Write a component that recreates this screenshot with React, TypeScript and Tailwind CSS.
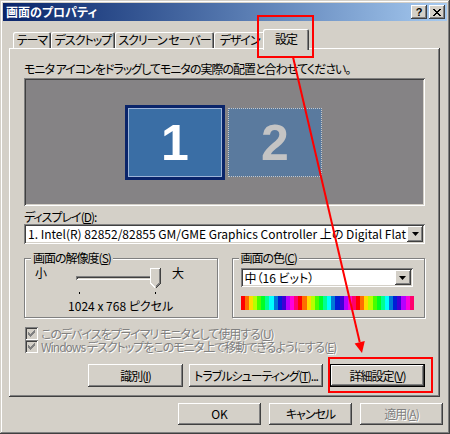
import React from 'react';

const raised =
  'shadow-[inset_-1px_-1px_#404040,inset_1px_1px_#ffffff,inset_-2px_-2px_#808080,inset_2px_2px_#d4d0c8]';
const sunken =
  'shadow-[inset_1px_1px_#808080,inset_-1px_-1px_#ffffff,inset_2px_2px_#404040,inset_-2px_-2px_#d4d0c8]';
const disabledText = 'text-[#808080] [text-shadow:1px_1px_0_#ffffff]';

const Button = ({ children, className = '', isDefault = false, disabled = false }: any) => (
  <div
    className={`flex items-center justify-center whitespace-nowrap bg-[#d4d0c8] ${
      isDefault
        ? 'shadow-[inset_0_0_0_1px_#000000,inset_-2px_-2px_#404040,inset_2px_2px_#ffffff,inset_-3px_-3px_#808080]'
        : raised
    } ${disabled ? disabledText : 'text-black'} ${className}`}
  >
    {children}
  </div>
);

const Combo = ({ text, className = '' }: any) => (
  <div className={`flex items-stretch bg-white p-[2px] ${sunken} ${className}`}>
    <div className="flex-1 overflow-hidden whitespace-nowrap pl-[2px] leading-[15px] tracking-normal">{text}</div>
    <div className={`flex w-[16px] items-center justify-center bg-[#d4d0c8] ${raised}`}>
      <svg width="7" height="4" viewBox="0 0 7 4">
        <path d="M0 0h7L3.5 4z" fill="#000" />
      </svg>
    </div>
  </div>
);

const Check = ({ children }: any) => (
  <div className="flex h-[13px] items-center">
    <div className={`flex h-[13px] w-[13px] shrink-0 items-center justify-center bg-[#d4d0c8] ${sunken}`}>
      <svg width="7" height="7" viewBox="0 0 7 7" shapeRendering="crispEdges">
        <path d="M0 2h1v1h1v1h1V3h1V2h1V1h1V0h1v3H6v1H5v1H4v1H3v1H2V6H1V5H0z" fill="#808080" />
      </svg>
    </div>
    <span className={`ml-[3px] whitespace-nowrap leading-[13px] ${disabledText}`}>{children}</span>
  </div>
);

const GroupBox = ({ label, children, className = '' }: any) => (
  <div
    className={`relative h-[60px] border border-[#808080] shadow-[1px_1px_0_#ffffff,inset_1px_1px_0_#ffffff] ${className}`}
  >
    <span className="absolute left-[6px] top-[-8px] whitespace-nowrap bg-[#d4d0c8] px-[2px] leading-[14px]">{label}</span>
    {children}
  </div>
);

const tabs = [
  { label: 'テーマ', w: 'w-[38px]' },
  { label: 'デスクトップ', w: 'w-[64px]' },
  { label: 'スクリーン セーバー', w: 'w-[99px]' },
  { label: 'デザイン', w: 'w-[51px]' },
];

const colorSteps = Array.from({ length: 42 }, (_, i) => (i % 14) * (360 / 14));

export default function App() {
  return (
    <div className="relative h-[434px] w-[450px] overflow-hidden bg-[#d4d0c8] p-[3px] font-['Noto_Sans_CJK_JP',sans-serif] text-[12px] tracking-[-1px] text-black [font-feature-settings:'palt'] shadow-[inset_-1px_-1px_#404040,inset_1px_1px_#d4d0c8,inset_-2px_-2px_#808080,inset_2px_2px_#ffffff]">
      {/* title bar */}
      <div className="flex h-[18px] items-center bg-linear-to-r from-[#0a246a] to-[#a6caf0] pl-[3px] pr-[2px]">
        <span className="flex-1 font-bold leading-[18px] tracking-normal text-white">画面のプロパティ</span>
        <div className={`flex h-[14px] w-[16px] items-center justify-center bg-[#d4d0c8] ${raised}`}>
          <span className="font-['Liberation_Sans',sans-serif] text-[11px] font-bold leading-[14px] tracking-normal">?</span>
        </div>
        <div className={`ml-[2px] flex h-[14px] w-[16px] items-center justify-center bg-[#d4d0c8] ${raised}`}>
          <svg width="8" height="7" viewBox="0 0 8 7" shapeRendering="crispEdges">
            <path
              d="M0 0h2v1h1v1h2V1h1V0h2v1H7v1H6v1H5v1h1v1h1v1h1v1H6V6H5V5H3v1H2v1H0V6h1V5h1V4h1V3H2V2H1V1H0z"
              fill="#000"
            />
          </svg>
        </div>
      </div>

      {/* tabs */}
      <div className="mx-[6px] mt-[8px] flex h-[19px] items-end pl-[4px]">
        {tabs.map((t) => (
          <div
            key={t.label}
            className={`flex h-[16px] items-center justify-center whitespace-nowrap rounded-t-[2px] leading-[14px] ${t.w} shadow-[inset_1px_1px_#ffffff,inset_-1px_0_#404040,inset_-2px_0_#808080]`}
          >
            {t.label}
          </div>
        ))}
        <div className="relative z-10 -mb-[2px] -ml-[2px] flex h-[21px] w-[46px] items-start justify-center rounded-t-[2px] bg-[#d4d0c8] pt-[3px] leading-[14px] shadow-[inset_1px_1px_#ffffff,inset_-1px_0_#404040,inset_-2px_0_#808080]">
          設定
        </div>
      </div>

      {/* panel */}
      <div className={`mx-[6px] flex h-[349px] w-[431px] flex-col px-[15px] pt-[14px] ${raised}`}>
        <div className="whitespace-nowrap pl-[-2px] leading-[14px]">モニタ アイコンをドラッグしてモニタの実際の配置と合わせてください。</div>

        <div className={`mt-[2px] flex h-[128px] items-start bg-[#858385] pl-[101px] pt-[27px] ${sunken}`}>
          <div className="h-[75px] w-[100px] border-[3px] border-[#0a246a]">
            <div className="flex h-full items-center justify-center border border-[#9cb4d8] bg-[#3a6ea5]">
              <span className="font-['Liberation_Sans',sans-serif] text-[50px] font-bold leading-none tracking-normal text-white">1</span>
            </div>
          </div>
          <div className="ml-[3px] mt-[3px] flex h-[69px] w-[94px] items-center justify-center border border-dotted border-[#c8c8c8] bg-[#5a7a9e]">
            <span className="font-['Liberation_Sans',sans-serif] text-[50px] font-bold leading-none tracking-normal text-[#c4c4c4]">2</span>
          </div>
        </div>

        <div className="mt-[4px] leading-[14px]">
          ディスプレイ(<u>D</u>):
        </div>
        <Combo
          className="h-[20px]"
          text="1. Intel(R) 82852/82855 GM/GME Graphics Controller 上の Digital Flat Panel (1024x768)"
        />

        <div className="mt-[14px] grid grid-cols-2 gap-[14px]">
          <GroupBox
            label={
              <>
                画面の解像度(<u>S</u>)
              </>
            }
          >
            <div className="flex h-[35px] items-start pl-[10px]">
              <span className="mt-[7px] leading-[14px]">小</span>
              <div className="relative ml-[28px] h-[35px] w-[90px]">
                <div className="absolute left-[2px] top-[17px] h-[4px] w-[83px] shadow-[inset_1px_1px_#808080,inset_-1px_-1px_#ffffff,inset_2px_2px_#404040]" />
                <svg className="absolute left-[76px] top-[9px]" width="11" height="21" viewBox="0 0 11 21" shapeRendering="crispEdges">
                  <path d="M0 0h11v15l-5.5 6L0 15z" fill="#d4d0c8" />
                  <path d="M0.5 15V0.5h10" stroke="#ffffff" fill="none" />
                  <path d="M10.5 0v15.2L5.5 20.5" stroke="#404040" fill="none" />
                  <path d="M9.5 1v14L5.5 19.3" stroke="#808080" fill="none" />
                  <path d="M0.5 15L5 19.5" stroke="#ffffff" fill="none" />
                </svg>
                <div className="absolute left-[5px] top-[33px] h-[2px] w-[1px] bg-black" />
                <div className="absolute left-[81px] top-[33px] h-[2px] w-[1px] bg-black" />
              </div>
              <span className="ml-[8px] mt-[7px] leading-[14px]">大</span>
            </div>
            <div className="mt-[5px] text-center leading-[14px] tracking-normal">1024 x 768 ピクセル</div>
          </GroupBox>

          <GroupBox
            label={
              <>
                画面の色(<u>C</u>)
              </>
            }
          >
            <div className="pl-[8px] pt-[9px]">
              <Combo className="h-[19px] w-[172px]" text="中（16 ビット）" />
              <div className="mt-[9px] flex h-[14px] w-[173px]">
                {colorSteps.map((h, i) => (
                  <div key={i} className="flex-1" style={{ backgroundColor: `hsl(${h} 100% ${h > 200 && h < 260 ? 42 : 50}%)` }} />
                ))}
              </div>
            </div>
          </GroupBox>
        </div>

        <div className="mt-[9px] flex flex-col pl-[1px]">
          <Check>
            このデバイスをプライマリ モニタとして使用する(<u>U</u>)
          </Check>
          <Check>
            Windows デスクトップをこのモニタ上で移動できるようにする(<u>E</u>)
          </Check>
        </div>

        <div className="mt-[11px] flex h-[23px] justify-end gap-[6px]">
          <Button className="w-[95px]">
            識別(<u>I</u>)
          </Button>
          <Button className="w-[134px]">
            トラブルシューティング(<u>T</u>)...
          </Button>
          <Button className="ml-[1px] w-[95px]" isDefault>
            詳細設定(<u>V</u>)
          </Button>
        </div>
      </div>

      {/* dialog buttons */}
      <div className="mt-[6px] flex h-[22px] justify-end gap-[8px] pr-[4px]">
        <Button className="w-[83px] tracking-normal">OK</Button>
        <Button className="w-[83px]">キャンセル</Button>
        <Button className="w-[83px]" disabled>
          適用(<u>A</u>)
        </Button>
      </div>

      {/* red annotations */}
      <svg className="pointer-events-none absolute left-0 top-0" width="450" height="434" viewBox="0 0 450 434">
        <rect x="258" y="16" width="55" height="41" fill="none" stroke="#ff0000" strokeWidth="2" />
        <line x1="293" y1="57" x2="359.7" y2="342" stroke="#ff0000" strokeWidth="2" />
        <polygon points="362,353 364.8,341 354.6,343.4" fill="#ff0000" />
        <rect x="329" y="358" width="103" height="34" fill="none" stroke="#ff0000" strokeWidth="2" />
      </svg>
    </div>
  );
}
